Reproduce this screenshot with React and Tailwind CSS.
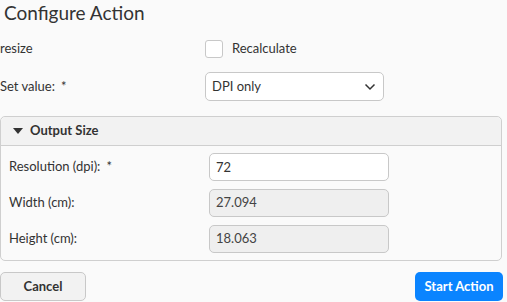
import React, { useState } from 'react';

const font = { fontFamily: 'Lato, "Noto Sans", sans-serif' };

function Row({ label, required, children }) {
  return (
    <div className="flex items-center h-[28px]">
      <div className="w-[200px] text-[13px] text-[#333]">
        {label}
        {required && <span className="ml-[6px]">*</span>}
      </div>
      {children}
    </div>
  );
}

export default function App() {
  const [checked, setChecked] = useState(false);

  return (
    <div className="w-[507px] h-[302px] bg-[#fafafa] overflow-hidden font-['Lato','Noto_Sans',sans-serif]" style={font}>
      <h1 className="text-[19px] leading-[26px] text-[#333] pl-[4px] pt-0">Configure Action</h1>

      <div className="mt-[13px] flex items-center h-[20px]">
        <div className="w-[205px] text-[13px] text-[#333]">resize</div>
        <button
          onClick={() => setChecked(!checked)}
          className="w-[18px] h-[18px] rounded-[3px] border border-[#c8c8c8] bg-white"
        />
        <span className="ml-[9px] text-[13px] text-[#333]">Recalculate</span>
      </div>

      <div className="mt-[13px] flex items-center h-[29px]">
        <div className="w-[205px] text-[13px] text-[#333]">
          Set value:<span className="ml-[6px]">*</span>
        </div>
        <div className="w-[179px] h-[29px] rounded-[5px] border border-[#c8c8c8] bg-white flex items-center justify-between px-[6px] text-[13px] text-[#333]">
          <span>DPI only</span>
          <svg width="12" height="8" viewBox="0 0 12 8" className="mr-[1px]">
            <path d="M1.5 1.5 L6 6 L10.5 1.5" fill="none" stroke="#333" strokeWidth="1.5" />
          </svg>
        </div>
      </div>

      <div className="mt-[15px] w-[502px] rounded-[5px] border border-[#cfcfcf] bg-[#fafafa]">
        <div className="h-[29px] bg-[#f2f2f2] border-b border-[#cfcfcf] rounded-t-[5px] flex items-center pl-[12px]">
          <svg width="10" height="6" viewBox="0 0 10 6">
            <path d="M0 0 L10 0 L5 6 Z" fill="#333" />
          </svg>
          <span className="ml-[7px] text-[13px] font-bold text-[#333]">Output Size</span>
        </div>
        <div className="pt-[7px] pb-[7px] pl-[8px] flex flex-col gap-[8px]">
          <Row label="Resolution (dpi):" required>
            <input
              defaultValue="72"
              className="w-[180px] h-[28px] rounded-[5px] border border-[#c8c8c8] bg-white px-[6px] text-[13px] text-[#333] outline-none"
            />
          </Row>
          <Row label="Width (cm):">
            <div className="w-[180px] h-[28px] rounded-[5px] border border-[#c8c8c8] bg-[#efefef] px-[6px] text-[13px] text-[#444] flex items-center">27.094</div>
          </Row>
          <Row label="Height (cm):">
            <div className="w-[180px] h-[28px] rounded-[5px] border border-[#c8c8c8] bg-[#efefef] px-[6px] text-[13px] text-[#444] flex items-center">18.063</div>
          </Row>
        </div>
      </div>

      <div className="mt-[11px] flex justify-between w-[503px]">
        <button className="w-[86px] h-[29px] rounded-[5px] border border-[#c8c8c8] bg-[#f2f2f2] text-[13px] font-bold text-[#333]">Cancel</button>
        <button className="w-[88px] h-[29px] rounded-[5px] bg-[#0a84ff] text-[13px] font-bold text-white">Start Action</button>
      </div>
    </div>
  );
}
